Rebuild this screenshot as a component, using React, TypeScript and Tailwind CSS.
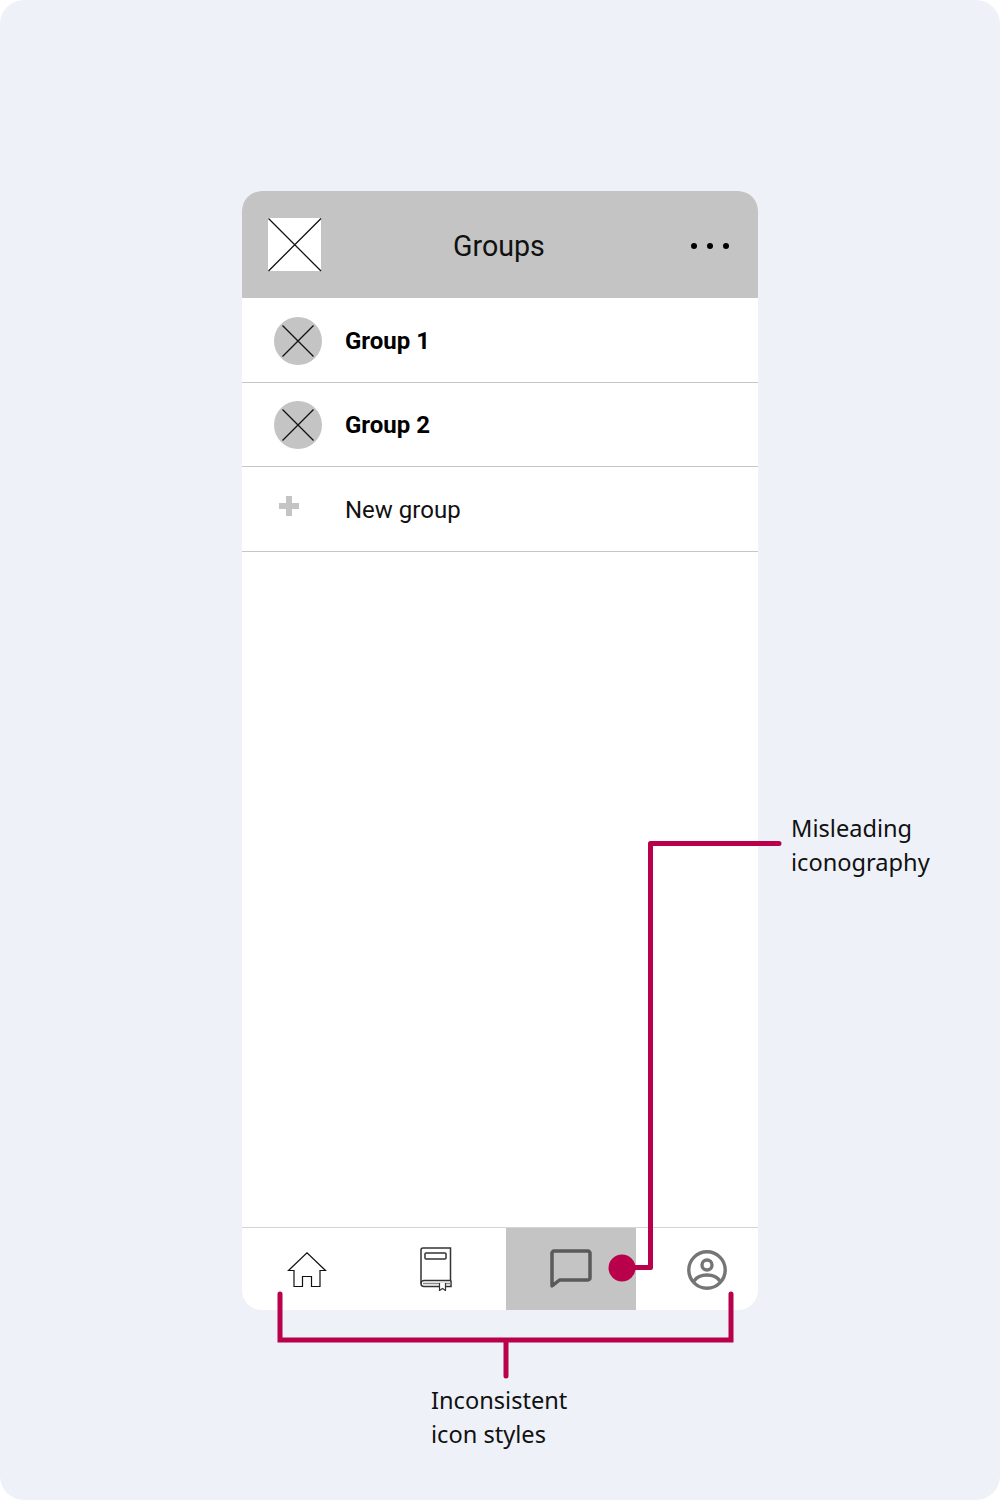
import React from 'react';

const CrossBox = () => (
  <svg width="54" height="54" viewBox="0 0 54 54" className="block">
    <rect width="53" height="53" fill="#fff" />
    <path d="M0.5 0.5L53 53M53 0.5L0.5 53" stroke="#111" strokeWidth="1.3" fill="none" />
  </svg>
);

const Avatar = () => (
  <svg width="48" height="48" viewBox="0 0 48 48" className="block">
    <circle cx="24" cy="24" r="24" fill="#c4c4c4" />
    <path d="M8.500 8.500L39.500 39.500M39.500 8.500L8.500 39.500" stroke="#111" strokeWidth="1.3" fill="none" />
  </svg>
);

const HomeIcon = () => (
  <svg width="40" height="36" viewBox="0 0 40 36" className="block">
    <path
      d="M1.500 18.500L20 0.800L38.500 18.500H33V34.500H24.500V24.500H15.500V34.500H7V18.500Z"
      fill="none"
      stroke="#111"
      strokeWidth="1.200"
    />
  </svg>
);

const BookIcon = () => (
  <svg width="32" height="44" viewBox="0 0 32 44" className="block">
    <path
      d="M3 1H30.500V33.500H4C2.300 33.500 1 35 1 36.500C1 38.500 2.300 39.500 4 39.500H31V33.500"
      fill="none"
      stroke="#333"
      strokeWidth="1.500"
    />
    <path d="M3 1C2 1 1 2 1 3V36.500" fill="none" stroke="#333" strokeWidth="1.500" />
    <rect x="5" y="6" width="21" height="6" rx="1" fill="none" stroke="#333" strokeWidth="1.500" />
    <path d="M3 36.500H31" stroke="#888" strokeWidth="1.500" />
    <path d="M19.500 36V43.500L22.500 41.500L25.500 43.500V36" fill="#fff" stroke="#333" strokeWidth="1.200" />
  </svg>
);

const ChatIcon = () => (
  <svg width="42" height="41" viewBox="0 0 42 41" className="block">
    <path
      d="M4 2H38C39 2 40 3 40 4V29C40 30 39 31 38 31H9.500L2 37V4C2 3 3 2 4 2Z"
      fill="none"
      stroke="#5a5a5a"
      strokeWidth="3.500"
      strokeLinejoin="round"
    />
  </svg>
);

const ProfileIcon = () => (
  <svg width="40" height="40" viewBox="0 0 40 40" className="block">
    <circle cx="20" cy="20" r="18.200" fill="none" stroke="#757575" strokeWidth="3.400" />
    <circle cx="20" cy="15" r="5" fill="none" stroke="#757575" strokeWidth="3.400" />
    <path d="M7 31C10 26.500 15 25 20 25C25 25 30 26.500 33 31" fill="none" stroke="#757575" strokeWidth="3.400" />
  </svg>
);

const GroupRow = ({ name, height, textPad }: { name: string; height: string; textPad: string }) => (
  <div className={`flex items-center border-b border-[#c6c6c6] pl-[32px] pt-[1px] ${height}`}>
    <Avatar />
    <span className={`ml-[23px] text-[24px] font-bold text-black ${textPad}`}>{name}</span>
  </div>
);

export default function App() {
  return (
    <div className="relative h-[1500px] w-[1000px] overflow-hidden bg-white font-['Roboto',sans-serif]">
      <div className="h-full w-full rounded-[24px] bg-[#eef1f8] pt-[191px] pl-[242px]">
        {/* phone */}
        <div className="flex h-[1119px] w-[516px] flex-col overflow-hidden rounded-[20px] bg-white">
          <div className="relative flex h-[107px] shrink-0 items-center bg-[#c4c4c4] pl-[26px] pr-[29px]">
            <CrossBox />
            <span className="flex-1 pr-[15px] pt-[3px] text-center text-[28.600px] text-[#111]">Groups</span>
            <div className="mt-[2px] flex gap-[10px]">
              <span className="h-[6px] w-[6px] rounded-full bg-black" />
              <span className="h-[6px] w-[6px] rounded-full bg-black" />
              <span className="h-[6px] w-[6px] rounded-full bg-black" />
            </div>
          </div>

          <GroupRow name="Group 1" height="h-[85px]" textPad="pt-[1px]" />
          <GroupRow name="Group 2" height="h-[84px]" textPad="pt-0" />
          <div className="flex h-[85px] items-center border-b border-[#c6c6c6] pl-[33px]">
            <span className="relative -mt-[7px] block h-[20px] w-[47px]">
              <span className="absolute left-[4px] top-[7px] h-[6px] w-[20px] bg-[#c4c4c4]" />
              <span className="absolute left-[11px] top-0 h-[20px] w-[6px] bg-[#c4c4c4]" />
            </span>
            <span className="ml-[23px] pt-[2px] text-[24px] text-[#111]">New group</span>
          </div>

          <div className="flex-1" />

          <div className="flex h-[83px] shrink-0 border-t border-[#d4d4d4]">
            <div className="flex w-[132px] items-center justify-end pr-[47px] pt-[1px]">
              <HomeIcon />
            </div>
            <div className="flex w-[132px] items-center justify-end pr-[54px]">
              <BookIcon />
            </div>
            <div className="flex w-[130px] items-center justify-start bg-[#c4c4c4] pl-[44px] pt-[1px]">
              <ChatIcon />
            </div>
            <div className="flex flex-1 items-center pl-[51px] pt-[2px]">
              <ProfileIcon />
            </div>
          </div>
        </div>
      </div>

      {/* annotation lines */}
      <svg className="absolute left-0 top-0" width="1000" height="1500" viewBox="0 0 1000 1500" fill="none">
        <path
          d="M779 843.500H650.500V1267.500H625"
          stroke="#b8004b"
          strokeWidth="5"
          strokeLinecap="round"
          strokeLinejoin="round"
        />
        <circle cx="622" cy="1268" r="13.500" fill="#b8004b" />
        <path
          d="M280 1294V1340H731V1294M506 1340V1376"
          stroke="#b8004b"
          strokeWidth="5"
          strokeLinecap="round"
          strokeLinejoin="miter"
        />
      </svg>

      <div className="absolute left-[791px] top-[811px] font-['Noto_Sans',sans-serif] text-[23.6px] leading-[34px] text-[#111]">
        Misleading
        <br />
        iconography
      </div>
      <div className="absolute left-[431px] top-[1383px] font-['Noto_Sans',sans-serif] text-[23.6px] leading-[34px] text-[#111]">
        Inconsistent
        <br />
        icon styles
      </div>
    </div>
  );
}
